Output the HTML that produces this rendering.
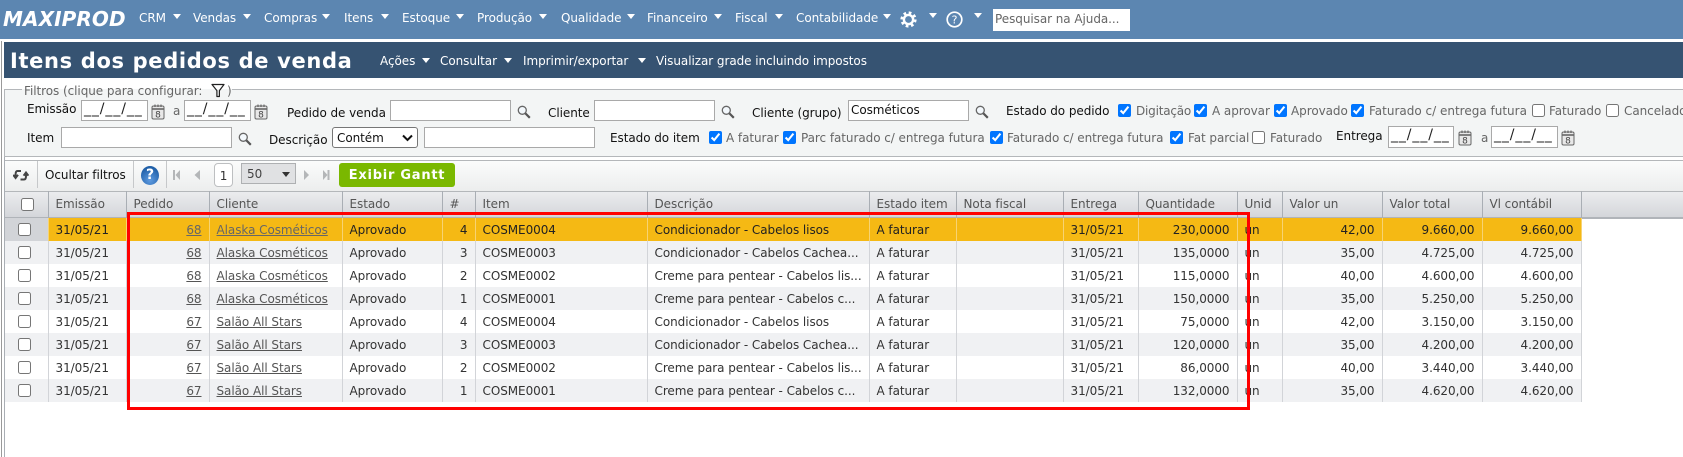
<!DOCTYPE html>
<html lang="pt-BR">
<head>
<meta charset="utf-8">
<title>Itens dos pedidos de venda</title>
<style>
html,body{margin:0;padding:0;background:#fff;}
body{position:relative;width:1683px;height:457px;overflow:hidden;font-family:"DejaVu Sans","Liberation Sans",sans-serif;font-size:12px;letter-spacing:-.06px;color:#333;}
.a{position:absolute;}
.t{position:absolute;line-height:16px;white-space:nowrap;}
.n{color:#fff;top:10px;}
.m{color:#fff;top:53px;}
.c{position:absolute;width:0;height:0;border-left:4.5px solid transparent;border-right:4.5px solid transparent;border-top:5px solid #fff;}
.l{color:#111;}
.g{color:#666;}
.i{position:absolute;box-sizing:border-box;background:#fff;border:1px solid #a9a9a9;line-height:18px;padding-left:3px;color:#222;white-space:nowrap;overflow:hidden;}
.d{font-size:14px;letter-spacing:.9px;line-height:16px;padding-left:2px;}
input[type=checkbox]{position:absolute;margin:0;width:13px;height:13px;}
table{position:absolute;left:5px;top:191px;border-collapse:collapse;table-layout:fixed;width:1576px;}
td,th{box-sizing:border-box;padding:0 7px;overflow:hidden;white-space:nowrap;font-weight:normal;text-align:left;border-right:1px solid #d2d4d8;height:23px;line-height:22px;position:relative;}
th{height:27px;border-right:1px solid #a9aeb4;color:#555;line-height:25px;}
td.r{text-align:right;}
td u{text-decoration:underline;color:#555;}
tr.s td{background:#f5b914;color:#222;border-right-color:#f7d373;}
tr.s td u{color:#666;}
tr.s td:first-child{background:#d2d4d8;}
tr.o td{background:#f0f1f3;}
td input[type=checkbox]{left:13px;top:5px;}
th input[type=checkbox]{left:16px;top:7px;}
</style>
</head>
<body>
<!-- nav -->
<div class="a" style="left:0;top:0;width:1683px;height:39px;background:#5c86b1"></div>
<div class="t" style="left:3px;top:7px;font-size:20px;line-height:24px;font-weight:bold;font-style:italic;color:#fff;letter-spacing:.1px">MAXIPROD</div>
<div class="t n" style="left:139px">CRM</div><div class="c" style="left:173px;top:14px"></div>
<div class="t n" style="left:193px">Vendas</div><div class="c" style="left:243px;top:14px"></div>
<div class="t n" style="left:264px">Compras</div><div class="c" style="left:322px;top:14px"></div>
<div class="t n" style="left:344px">Itens</div><div class="c" style="left:381px;top:14px"></div>
<div class="t n" style="left:402px">Estoque</div><div class="c" style="left:456px;top:14px"></div>
<div class="t n" style="left:477px">Produção</div><div class="c" style="left:539px;top:14px"></div>
<div class="t n" style="left:561px">Qualidade</div><div class="c" style="left:627px;top:14px"></div>
<div class="t n" style="left:647px">Financeiro</div><div class="c" style="left:714px;top:14px"></div>
<div class="t n" style="left:735px">Fiscal</div><div class="c" style="left:775px;top:14px"></div>
<div class="t n" style="left:796px">Contabilidade</div><div class="c" style="left:883px;top:14px"></div>
<svg class="a" style="left:900px;top:11px" width="17" height="17" viewBox="0 0 17 17"><circle cx="8.5" cy="8.5" r="4.6" fill="none" stroke="#fff" stroke-width="2.4"/><circle cx="8.5" cy="8.5" r="6.8" fill="none" stroke="#fff" stroke-width="2.6" stroke-dasharray="2.7 2.64"/></svg>
<div class="c" style="left:929px;top:13px"></div>
<svg class="a" style="left:946px;top:11px" width="17" height="17" viewBox="0 0 17 17"><circle cx="8.5" cy="8.5" r="7.3" fill="none" stroke="#fff" stroke-width="1.7"/><text x="8.5" y="12.5" font-size="11" text-anchor="middle" fill="#fff" font-family="DejaVu Sans">?</text></svg>
<div class="c" style="left:974px;top:13px"></div>
<div class="a" style="left:993px;top:9px;width:137px;height:22px;box-sizing:border-box;background:#fff;padding-left:2px;line-height:21px;color:#666">Pesquisar na Ajuda...</div>
<!-- title -->
<div class="a" style="left:1px;top:41px;width:1px;height:416px;background:#9a9a9a"></div>
<div class="a" style="left:4px;top:42px;width:1679px;height:36px;background:#365372"></div>
<div class="t" style="left:10px;top:47px;font-size:21px;line-height:28px;font-weight:bold;color:#fff;letter-spacing:.65px">Itens dos pedidos de venda</div>
<div class="t m" style="left:380px">Ações</div><div class="c" style="left:422px;top:58px"></div>
<div class="t m" style="left:440px">Consultar</div><div class="c" style="left:504px;top:58px"></div>
<div class="t m" style="left:523px">Imprimir/exportar</div><div class="c" style="left:638px;top:58px"></div>
<div class="t m" style="left:656px">Visualizar grade incluindo impostos</div>
<!-- filters -->
<div class="a" style="left:4px;top:89px;width:1679px;height:68px;box-sizing:border-box;background:#f3f5f5;border-top:1px solid #b4b7ba;border-left:1px solid #b4b7ba;border-bottom:1px solid #b4b7ba"></div>
<div class="a" style="left:22px;top:84px;width:210px;height:12px;background:linear-gradient(#fff 0,#fff 5px,#f3f5f5 5px)"></div>
<div class="t g" style="left:24px;top:83px;">Filtros (clique para configurar:</div>
<svg class="a" style="left:211px;top:83px" width="14" height="15" viewBox="0 0 14 15"><path d="M1 1.5H13L8.4 7.6V13.5H5.9V7.6Z" fill="none" stroke="#222" stroke-width="1.2" stroke-linejoin="round"/></svg>
<div class="t g" style="left:227px;top:83px">)</div>

<div class="t l" style="left:27px;top:101px">Emissão</div>
<div class="i d" style="left:81px;top:100px;width:67px;height:21px">__/__/__</div>
<svg class="a" style="left:151px;top:104px" width="14" height="16" viewBox="0 0 14 16"><rect x="1" y="2" width="12" height="13" rx="1.5" fill="#e8e8e8" stroke="#666"/><path d="M1 5H13" stroke="#666" stroke-width="1.6"/><path d="M4 .5V3M7 .5V3M10 .5V3" stroke="#555"/><text x="7" y="13.5" font-size="9" text-anchor="middle" fill="#444" font-family="DejaVu Sans">8</text></svg>
<div class="t g" style="left:173px;top:103px">a</div>
<div class="i d" style="left:184px;top:100px;width:67px;height:21px">__/__/__</div>
<svg class="a" style="left:254px;top:104px" width="14" height="16" viewBox="0 0 14 16"><rect x="1" y="2" width="12" height="13" rx="1.5" fill="#e8e8e8" stroke="#666"/><path d="M1 5H13" stroke="#666" stroke-width="1.6"/><path d="M4 .5V3M7 .5V3M10 .5V3" stroke="#555"/><text x="7" y="13.5" font-size="9" text-anchor="middle" fill="#444" font-family="DejaVu Sans">8</text></svg>
<div class="t l" style="left:287px;top:105px">Pedido de venda</div>
<div class="i" style="left:390px;top:100px;width:121px;height:21px"></div>
<svg class="a" style="left:517px;top:105px" width="14" height="14" viewBox="0 0 14 14"><circle cx="5.3" cy="5.3" r="4" fill="#f3f8fc" stroke="#666" stroke-width="1.3"/><path d="M8.4 8.4L12.8 12.8" stroke="#555" stroke-width="2.2"/></svg>
<div class="t l" style="left:548px;top:105px">Cliente</div>
<div class="i" style="left:594px;top:100px;width:121px;height:21px"></div>
<svg class="a" style="left:721px;top:105px" width="14" height="14" viewBox="0 0 14 14"><circle cx="5.3" cy="5.3" r="4" fill="#f3f8fc" stroke="#666" stroke-width="1.3"/><path d="M8.4 8.4L12.8 12.8" stroke="#555" stroke-width="2.2"/></svg>
<div class="t l" style="left:752px;top:105px">Cliente (grupo)</div>
<div class="i" style="left:848px;top:100px;width:121px;height:21px;line-height:19px;padding-left:2px;color:#111">Cosméticos</div>
<svg class="a" style="left:975px;top:105px" width="14" height="14" viewBox="0 0 14 14"><circle cx="5.3" cy="5.3" r="4" fill="#f3f8fc" stroke="#666" stroke-width="1.3"/><path d="M8.4 8.4L12.8 12.8" stroke="#555" stroke-width="2.2"/></svg>
<div class="t l" style="left:1006px;top:103px">Estado do pedido</div>
<input type="checkbox" checked style="left:1118px;top:104px"><div class="t g" style="left:1136px;top:103px;letter-spacing:-.2px">Digitação</div>
<input type="checkbox" checked style="left:1194px;top:104px"><div class="t g" style="left:1212px;top:103px">A aprovar</div>
<input type="checkbox" checked style="left:1274px;top:104px"><div class="t g" style="left:1291px;top:103px">Aprovado</div>
<input type="checkbox" checked style="left:1351px;top:104px"><div class="t g" style="left:1369px;top:103px;letter-spacing:0">Faturado c/ entrega futura</div>
<input type="checkbox" style="left:1532px;top:104px"><div class="t g" style="left:1549px;top:103px">Faturado</div>
<input type="checkbox" style="left:1606px;top:104px"><div class="t g" style="left:1624px;top:103px">Cancelado</div>

<div class="t l" style="left:27px;top:130px">Item</div>
<div class="i" style="left:61px;top:127px;width:171px;height:21px"></div>
<svg class="a" style="left:238px;top:132px" width="14" height="14" viewBox="0 0 14 14"><circle cx="5.3" cy="5.3" r="4" fill="#f3f8fc" stroke="#666" stroke-width="1.3"/><path d="M8.4 8.4L12.8 12.8" stroke="#555" stroke-width="2.2"/></svg>
<div class="t l" style="left:269px;top:132px">Descrição</div>
<div class="i" style="left:332px;top:127px;width:86px;height:21px;border:1px solid #767676;border-radius:3px;padding-left:4px;line-height:20px;color:#111">Contém</div>
<svg class="a" style="left:402px;top:134px" width="11" height="8" viewBox="0 0 11 8"><path d="M1 1.5L5.5 6L10 1.5" fill="none" stroke="#111" stroke-width="2"/></svg>
<div class="i" style="left:424px;top:127px;width:171px;height:21px"></div>
<div class="t l" style="left:610px;top:130px">Estado do item</div>
<input type="checkbox" checked style="left:709px;top:131px"><div class="t g" style="left:726px;top:130px">A faturar</div>
<input type="checkbox" checked style="left:783px;top:131px"><div class="t g" style="left:801px;top:130px">Parc faturado c/ entrega futura</div>
<input type="checkbox" checked style="left:990px;top:131px"><div class="t g" style="left:1007px;top:130px">Faturado c/ entrega futura</div>
<input type="checkbox" checked style="left:1170px;top:131px"><div class="t g" style="left:1188px;top:130px">Fat parcial</div>
<input type="checkbox" style="left:1252px;top:131px"><div class="t g" style="left:1270px;top:130px">Faturado</div>
<div class="t l" style="left:1336px;top:128px">Entrega</div>
<div class="i d" style="left:1388px;top:126px;width:66px;height:22px">__/__/__</div>
<svg class="a" style="left:1458px;top:130px" width="14" height="16" viewBox="0 0 14 16"><rect x="1" y="2" width="12" height="13" rx="1.5" fill="#e8e8e8" stroke="#666"/><path d="M1 5H13" stroke="#666" stroke-width="1.6"/><path d="M4 .5V3M7 .5V3M10 .5V3" stroke="#555"/><text x="7" y="13.5" font-size="9" text-anchor="middle" fill="#444" font-family="DejaVu Sans">8</text></svg>
<div class="t g" style="left:1481px;top:130px">a</div>
<div class="i d" style="left:1491px;top:126px;width:67px;height:22px">__/__/__</div>
<svg class="a" style="left:1561px;top:130px" width="14" height="16" viewBox="0 0 14 16"><rect x="1" y="2" width="12" height="13" rx="1.5" fill="#e8e8e8" stroke="#666"/><path d="M1 5H13" stroke="#666" stroke-width="1.6"/><path d="M4 .5V3M7 .5V3M10 .5V3" stroke="#555"/><text x="7" y="13.5" font-size="9" text-anchor="middle" fill="#444" font-family="DejaVu Sans">8</text></svg>

<!-- toolbar -->
<div class="a" style="left:4px;top:157px;width:1px;height:300px;background:#a9aeb4"></div>
<div class="a" style="left:5px;top:160px;width:1678px;height:31px;box-sizing:border-box;border-top:1px solid #b4b7ba;background:linear-gradient(#fbfcfc,#eceded)"></div>
<svg class="a" style="left:13px;top:168px" width="16" height="15" viewBox="0 0 16 15"><path d="M8 3H4.5C3 3 2.6 4.5 2.6 6.5V9M.2 6.8L2.6 10L5 6.8" fill="none" stroke="#444" stroke-width="2"/><path d="M7.5 11.5H11C12.6 11.5 13 10 13 8V5.5M10.6 7.7L13 4.5L15.4 7.7" fill="none" stroke="#444" stroke-width="2"/></svg>
<div class="a" style="left:37px;top:161px;width:1px;height:27px;background:#c6c8ca"></div>
<div class="t" style="left:45px;top:167px;color:#111">Ocultar filtros</div>
<div class="a" style="left:133px;top:161px;width:1px;height:27px;background:#c6c8ca"></div>
<div class="a" style="left:141px;top:166px;width:18px;height:19px;border-radius:50%;background:radial-gradient(circle at 50% 75%,#5f9be0,#1f5fa8 75%);color:#fff;font-weight:bold;font-size:14px;line-height:19px;text-align:center">?</div>
<div class="a" style="left:166px;top:161px;width:1px;height:27px;background:#c6c8ca"></div>
<svg class="a" style="left:172px;top:168px" width="158" height="14" viewBox="0 0 158 14" fill="#b4b6b8"><rect x="1" y="2" width="2" height="10"/><path d="M8 2V12L3.5 7Z"/><path d="M28 2V12L22.5 7Z"/><path d="M132 2V12L137 7Z"/><path d="M151 2V12L155.5 7Z"/><rect x="155.5" y="2" width="2" height="10"/></svg>
<div class="a" style="left:214px;top:163px;width:19px;height:24px;box-sizing:border-box;border:1px solid #bdbfc1;border-radius:4px;background:#fff;text-align:center;line-height:24px;color:#333">1</div>
<div class="a" style="left:241px;top:163px;width:55px;height:21px;box-sizing:border-box;border:1px solid #aeb0b2;background:#e0e1e3;padding-left:5px;line-height:21px;color:#444">50</div>
<div class="c" style="left:282px;top:172px;border-top-color:#333;border-top-width:5px"></div>
<div class="a" style="left:339px;top:163px;width:116px;height:24px;background:#7ab800;border-radius:3px;color:#fff;font-weight:bold;font-size:13px;line-height:26px;text-align:center;letter-spacing:.75px">Exibir Gantt</div>

<!-- grid header background -->
<div class="a" style="left:5px;top:191px;width:1678px;height:28px;box-sizing:border-box;background:linear-gradient(#ebecee,#d4d6da);border-top:1px solid #b4b7ba;border-bottom:2px solid #b0b4b9"></div>
<table>
<colgroup><col style="width:43px"><col style="width:78px"><col style="width:83px"><col style="width:133px"><col style="width:100px"><col style="width:33px"><col style="width:172px"><col style="width:222px"><col style="width:87px"><col style="width:107px"><col style="width:75px"><col style="width:99px"><col style="width:45px"><col style="width:100px"><col style="width:100px"><col style="width:99px"></colgroup>
<tr><th><input type="checkbox"></th><th>Emissão</th><th>Pedido</th><th>Cliente</th><th>Estado</th><th>#</th><th>Item</th><th>Descrição</th><th>Estado item</th><th>Nota fiscal</th><th>Entrega</th><th>Quantidade</th><th>Unid</th><th>Valor un</th><th>Valor total</th><th>Vl contábil</th></tr>
<tr class="s"><td><input type="checkbox"></td><td>31/05/21</td><td class="r"><u>68</u></td><td><u>Alaska Cosméticos</u></td><td>Aprovado</td><td class="r">4</td><td>COSME0004</td><td>Condicionador - Cabelos lisos</td><td>A faturar</td><td></td><td>31/05/21</td><td class="r">230,0000</td><td>un</td><td class="r">42,00</td><td class="r">9.660,00</td><td class="r">9.660,00</td></tr>
<tr class="o"><td><input type="checkbox"></td><td>31/05/21</td><td class="r"><u>68</u></td><td><u>Alaska Cosméticos</u></td><td>Aprovado</td><td class="r">3</td><td>COSME0003</td><td>Condicionador - Cabelos Cachea...</td><td>A faturar</td><td></td><td>31/05/21</td><td class="r">135,0000</td><td>un</td><td class="r">35,00</td><td class="r">4.725,00</td><td class="r">4.725,00</td></tr>
<tr><td><input type="checkbox"></td><td>31/05/21</td><td class="r"><u>68</u></td><td><u>Alaska Cosméticos</u></td><td>Aprovado</td><td class="r">2</td><td>COSME0002</td><td>Creme para pentear - Cabelos lis...</td><td>A faturar</td><td></td><td>31/05/21</td><td class="r">115,0000</td><td>un</td><td class="r">40,00</td><td class="r">4.600,00</td><td class="r">4.600,00</td></tr>
<tr class="o"><td><input type="checkbox"></td><td>31/05/21</td><td class="r"><u>68</u></td><td><u>Alaska Cosméticos</u></td><td>Aprovado</td><td class="r">1</td><td>COSME0001</td><td>Creme para pentear - Cabelos c...</td><td>A faturar</td><td></td><td>31/05/21</td><td class="r">150,0000</td><td>un</td><td class="r">35,00</td><td class="r">5.250,00</td><td class="r">5.250,00</td></tr>
<tr><td><input type="checkbox"></td><td>31/05/21</td><td class="r"><u>67</u></td><td><u>Salão All Stars</u></td><td>Aprovado</td><td class="r">4</td><td>COSME0004</td><td>Condicionador - Cabelos lisos</td><td>A faturar</td><td></td><td>31/05/21</td><td class="r">75,0000</td><td>un</td><td class="r">42,00</td><td class="r">3.150,00</td><td class="r">3.150,00</td></tr>
<tr class="o"><td><input type="checkbox"></td><td>31/05/21</td><td class="r"><u>67</u></td><td><u>Salão All Stars</u></td><td>Aprovado</td><td class="r">3</td><td>COSME0003</td><td>Condicionador - Cabelos Cachea...</td><td>A faturar</td><td></td><td>31/05/21</td><td class="r">120,0000</td><td>un</td><td class="r">35,00</td><td class="r">4.200,00</td><td class="r">4.200,00</td></tr>
<tr><td><input type="checkbox"></td><td>31/05/21</td><td class="r"><u>67</u></td><td><u>Salão All Stars</u></td><td>Aprovado</td><td class="r">2</td><td>COSME0002</td><td>Creme para pentear - Cabelos lis...</td><td>A faturar</td><td></td><td>31/05/21</td><td class="r">86,0000</td><td>un</td><td class="r">40,00</td><td class="r">3.440,00</td><td class="r">3.440,00</td></tr>
<tr class="o"><td><input type="checkbox"></td><td>31/05/21</td><td class="r"><u>67</u></td><td><u>Salão All Stars</u></td><td>Aprovado</td><td class="r">1</td><td>COSME0001</td><td>Creme para pentear - Cabelos c...</td><td>A faturar</td><td></td><td>31/05/21</td><td class="r">132,0000</td><td>un</td><td class="r">35,00</td><td class="r">4.620,00</td><td class="r">4.620,00</td></tr>
</table>
<!-- red annotation -->
<div class="a" style="left:127px;top:212px;width:1123px;height:198px;box-sizing:border-box;border:3px solid #f00"></div>
</body>
</html>
